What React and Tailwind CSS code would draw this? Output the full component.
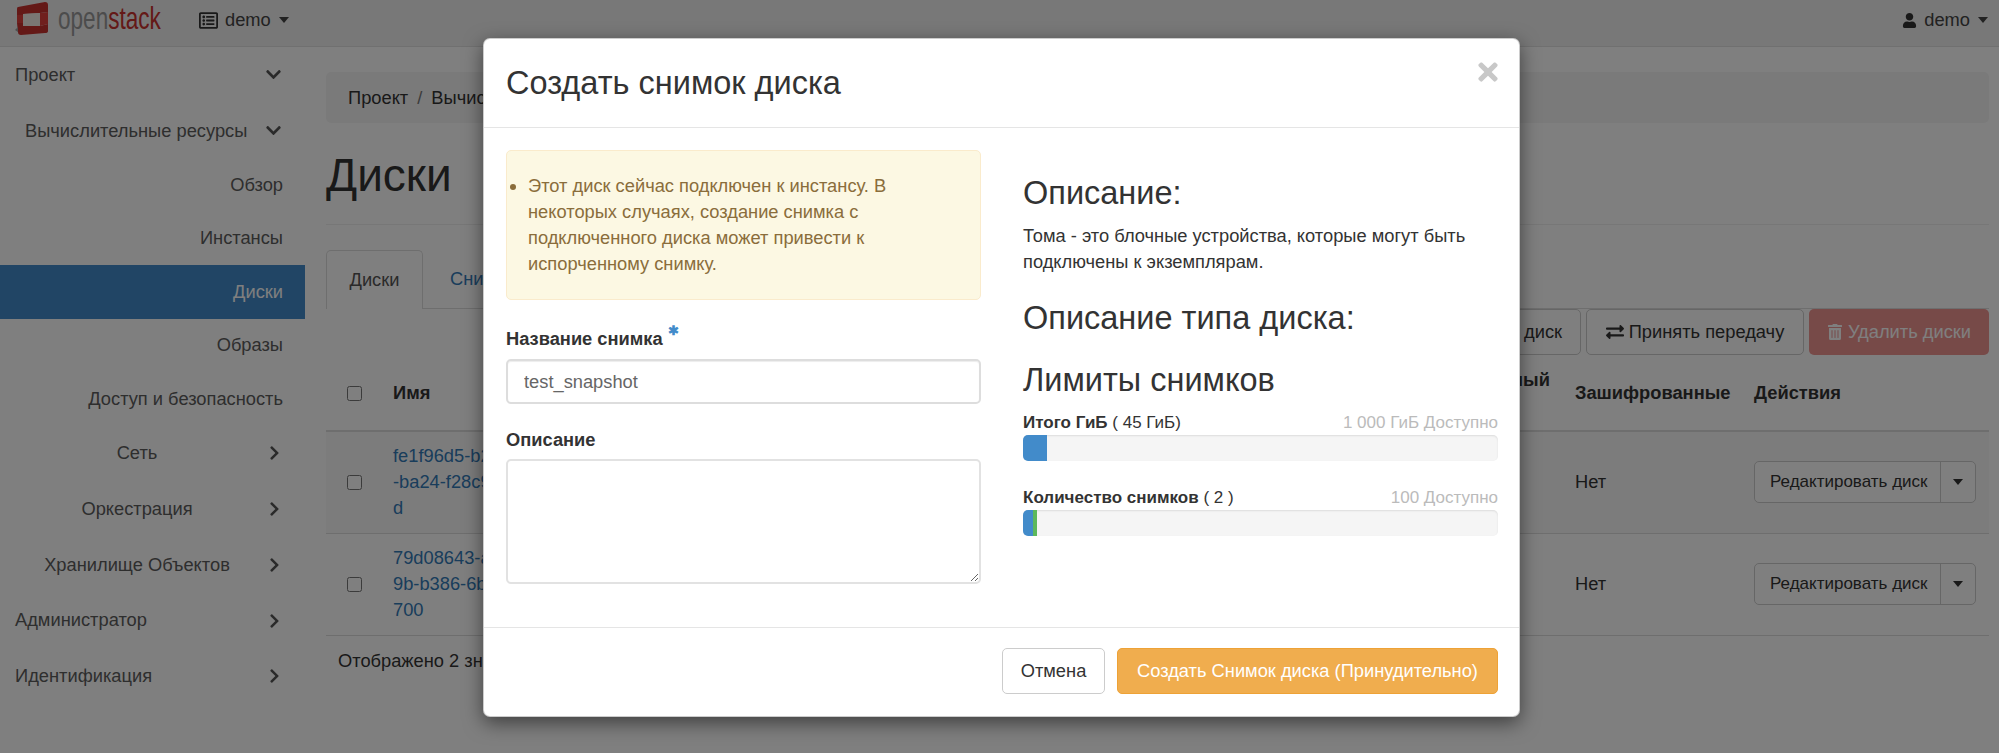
import React from "react";
import { FaChevronDown, FaChevronRight, FaExchangeAlt, FaRegListAlt, FaTimes, FaTrashAlt, FaUser } from "react-icons/fa";

const Caret = () => (
  <span className="block w-0 h-0 border-x-[5px] border-t-[6px] border-x-transparent border-t-current" />
);

const Logo = () => (
  <svg width="34" height="34" viewBox="0 0 34 34" className="shrink-0 mb-[4px]">
    <path d="M3 6 L30 1 Q33 1 33 4 L33 11 L25 12 L8 13 L8 14 L2 14 L2 8 Q2 6 3 6 Z" fill="#c8322f" />
    <path d="M2 22 L8 22 L8 25 L25 25 L33 23 L33 30 Q33 32 30 32 L6 34 Q3 34 3 31 Z" fill="#c8322f" />
    <path d="M2 14 L8 14 L8 22 L2 22 Z M25 12 L33 11 L33 23 L25 25 Z" fill="#e0413c" />
    <path d="M8 13 L25 12 L25 25 L8 25 Z" fill="#f4efe9" />
    <path d="M0 29 L3 26 L3 31 Z" fill="#a0a0a0" />
  </svg>
);

const NavRow = ({ label, pad, center, icon }) => (
  <div className={`flex items-center h-[55.75px] ${pad}`}>
    <span className={`flex-1 ${center ? "text-center" : ""}`}>{label}</span>
    {icon}
  </div>
);

const SubRow = ({ label, active }) => (
  <div className={`h-[53.4px] flex items-center justify-end pr-[22px] ${active ? "bg-[#428bca] text-white" : ""}`}>
    {label}
  </div>
);

const down = <FaChevronDown className="text-[17px] text-[#555]" />;
const right = <FaChevronRight className="text-[16px] w-[11px] text-[#555] mr-[2px]" />;

const Sidebar = () => (
  <div className="w-[305px] shrink-0 text-[#5c5c5c]">
    <NavRow label="Проект" pad="pl-[15px] pr-[23px]" icon={down} />
    <NavRow label="Вычислительные ресурсы" pad="pl-[25px] pr-[23px]" icon={down} />
    <SubRow label="Обзор" />
    <SubRow label="Инстансы" />
    <SubRow label="Диски" active />
    <SubRow label="Образы" />
    <SubRow label="Доступ и безопасность" />
    <NavRow label="Сеть" pad="pl-[5px] pr-[23px]" center icon={right} />
    <NavRow label="Оркестрация" pad="pl-[5px] pr-[23px]" center icon={right} />
    <NavRow label="Хранилище Объектов" pad="pl-[5px] pr-[23px]" center icon={right} />
    <NavRow label="Администратор" pad="pl-[15px] pr-[23px]" icon={right} />
    <NavRow label="Идентификация" pad="pl-[15px] pr-[23px]" icon={right} />
  </div>
);

const EditButton = () => (
  <div className="flex h-[42px] w-[222px] border border-[#ccc] rounded-[5px] bg-white text-[17px]">
    <div className="flex-1 flex items-center pl-[15px] border-r border-[#ccc]">Редактировать диск</div>
    <div className="w-[34px] flex items-center justify-center"><Caret /></div>
  </div>
);

const DiskRow = ({ lines, striped }) => (
  <tr className={`h-[102px] border-b-[1.25px] border-[#ddd] ${striped ? "bg-[#f9f9f9]" : ""}`}>
    <td className="pl-[21px]"><input type="checkbox" className="block w-[15px] h-[15px]" /></td>
    <td className="text-[#337ab7]">
      {lines.map((l) => <div key={l}>{l}</div>)}
    </td>
    <td />
    <td>Нет</td>
    <td><EditButton /></td>
  </tr>
);

const Page = () => (
  <div className="flex-1 min-w-0 pl-[21px] pr-[10px] pt-[25px] text-[#333]">
    <div className="h-[51px] bg-[#f5f5f5] rounded-[5px] pl-[22px] pt-[2px] flex items-center whitespace-nowrap">
      <span>Проект</span>
      <span className="mx-[9px] text-[#777]">/</span>
      <span>Вычислительные ресурсы</span>
      <span className="mx-[9px] text-[#777]">/</span>
      <span>Диски</span>
    </div>
    <h1 className="mt-[24px] pb-[21px] border-b border-[#eee] text-[46px] leading-[56px] text-[#333]">Диски</h1>
    <div className="mt-[25px] h-[59px] flex border-b border-[#ddd]">
      <div className="w-[97px] h-[59px] flex items-center justify-center border border-b-0 border-[#ddd] rounded-t-[5px] bg-white text-[#555]">Диски</div>
      <div className="ml-[27px] h-[58px] flex items-center text-[#337ab7]">Снимки диска</div>
    </div>
    <div className="h-[47px] flex justify-end gap-[5px]">
      <div className="h-[46px] w-[160px] flex items-center pl-[102px] border border-[#ccc] rounded-[5px]">диск</div>
      <div className="h-[46px] w-[218px] flex items-center justify-center gap-[5px] border border-[#ccc] rounded-[5px]">
        <FaExchangeAlt className="text-[18px]" /> Принять передачу
      </div>
      <div className="h-[46px] w-[180px] flex items-center justify-center gap-[5px] rounded-[5px] bg-[#ef9491] text-white">
        <FaTrashAlt className="text-[16px]" /> Удалить диски
      </div>
    </div>
    <table className="w-[1663px] table-fixed border-collapse">
      <colgroup>
        <col className="w-[67px]" />
        <col className="w-[1039px]" />
        <col className="w-[143px]" />
        <col className="w-[179px]" />
        <col className="w-[235px]" />
      </colgroup>
      <thead>
        <tr className="h-[75px] border-b-[2.5px] border-[#ddd] text-left font-bold">
          <th className="pl-[21px]"><input type="checkbox" className="block w-[15px] h-[15px]" /></th>
          <th>Имя</th>
          <th>Загрузочный<br />диск</th>
          <th>Зашифрованные</th>
          <th>Действия</th>
        </tr>
      </thead>
      <tbody>
        <DiskRow striped lines={["fe1f96d5-b2c4-4e1a", "-ba24-f28c91d7e3a", "d"]} />
        <DiskRow lines={["79d08643-a1f2-4c", "9b-b386-6be0f2d41", "700"]} />
      </tbody>
    </table>
    <div className="mt-[12px] pl-[12px] whitespace-nowrap">Отображено 2 значения</div>
  </div>
);

const Quota = ({ title, used, avail, children }) => (
  <div className="mb-[25px]">
    <div className="flex justify-between text-[17px] leading-[24px]">
      <span className="text-[#333]"><b>{title}</b> {used}</span>
      <span className="text-[#bbb]">{avail}</span>
    </div>
    <div className="h-[26px] rounded-[5px] bg-[#f5f5f5] shadow-[inset_0_1px_2px_rgba(0,0,0,0.1)] flex overflow-hidden">
      {children}
    </div>
  </div>
);

const Modal = () => (
  <div className="absolute left-[483px] top-[38px] w-[1037px] h-[679px] flex flex-col bg-white rounded-[7px] border border-black/20 shadow-[0_6px_19px_rgba(0,0,0,0.5)] text-[#333]">
    <div className="h-[89px] shrink-0 border-b border-[#e5e5e5] flex items-center justify-between pl-[22px] pr-[17px]">
      <h4 className="text-[32.5px] leading-[40px]">Создать снимок диска</h4>
      <FaTimes className="text-[28px] text-[#c8c8c8] mb-[23px]" />
    </div>
    <div className="h-[500px] shrink-0 border-b border-[#e5e5e5] flex pl-[22px] pr-[21px] pt-[22px]">
      <div className="w-[475px] shrink-0">
        <div className="h-[150px] bg-[#fcf8e3] border border-[#faebcc] rounded-[5px] text-[#8a6d3b] pl-[21px] pr-[10px] flex items-center">
          <ul className="list-disc">
            <li>Этот диск сейчас подключен к инстансу. В некоторых случаях, создание снимка с подключенного диска может привести к испорченному снимку.</li>
          </ul>
        </div>
        <div className="mt-[26px] h-[33px] font-bold flex">
          Название снимка
          <span className="text-[#428bca] text-[13px] leading-[12px] ml-[5px] -mt-[1px]">✱</span>
        </div>
        <input
          type="text"
          defaultValue="test_snapshot"
          className="block w-full h-[45px] px-[16px] border-2 border-[#ddd] rounded-[5px] text-[#666] shadow-[inset_0_1px_1px_rgba(0,0,0,0.075)]"
        />
        <div className="mt-[19px] h-[34px] font-bold flex items-center">Описание</div>
        <textarea className="block w-full h-[125px] mt-[2px] px-[16px] border-2 border-[#e2e2e2] rounded-[5px] resize-y" />
      </div>
      <div className="ml-[42px] w-[475px] shrink-0">
        <h3 className="mt-[26px] text-[32.5px] leading-[34px]">Описание:</h3>
        <p className="mt-[13px] text-[#333]">Тома - это блочные устройства, которые могут быть подключены к экземплярам.</p>
        <h3 className="mt-[25px] text-[32.5px] leading-[34px]">Описание типа диска:</h3>
        <h3 className="mt-[28px] text-[32.5px] leading-[34px]">Лимиты снимков</h3>
        <div className="mt-[14px]">
          <Quota title="Итого ГиБ" used="( 45 ГиБ)" avail="1 000 ГиБ Доступно">
            <div className="w-[24px] bg-[#428bca]" />
          </Quota>
          <Quota title="Количество снимков" used="( 2 )" avail="100 Доступно">
            <div className="w-[10px] bg-[#428bca]" />
            <div className="w-[4px] bg-[#5cb85c]" />
          </Quota>
        </div>
      </div>
    </div>
    <div className="flex-1 flex items-center justify-end gap-[12px] pr-[21px] pb-[2px]">
      <div className="h-[46px] w-[103px] flex items-center justify-center border border-[#ccc] rounded-[5px]">Отмена</div>
      <div className="h-[46px] w-[381px] flex items-center justify-center border border-[#eea236] rounded-[5px] bg-[#f0ad4e] text-white whitespace-nowrap">Создать Снимок диска (Принудительно)</div>
    </div>
  </div>
);

export default function App() {
  return (
    <div className="relative w-[1999px] h-[754px] overflow-hidden bg-white font-['Liberation_Sans',Arial,sans-serif] text-[18.3px] leading-[26.25px]">
      <div className="h-[47px] bg-[#f0f0f0] border-b border-[#e0e0e0] flex items-center pl-[15px] pr-[11px] pb-[6px] text-[#444]">
        <Logo />
        <div className="ml-[9px] w-[103px] h-[40px] mb-[4px] shrink-0">
          <span className="block whitespace-nowrap text-[32px] leading-[40px] text-[#999] origin-left scale-x-[0.705]">
            open<span className="text-[#c8322f]">stack</span>
          </span>
        </div>
        <FaRegListAlt className="ml-[38px] text-[19px] text-[#333]" />
        <span className="ml-[7px]">demo</span>
        <span className="ml-[8px]"><Caret /></span>
        <div className="ml-auto flex items-center">
          <FaUser className="text-[15px] text-[#333]" />
          <span className="ml-[7px]">demo</span>
          <span className="ml-[8px]"><Caret /></span>
        </div>
      </div>
      <div className="flex">
        <Sidebar />
        <Page />
      </div>
      {/* backdrop */}
      <div className="absolute inset-x-0 top-0 h-[753px] bg-black/50" />
      <Modal />
    </div>
  );
}
